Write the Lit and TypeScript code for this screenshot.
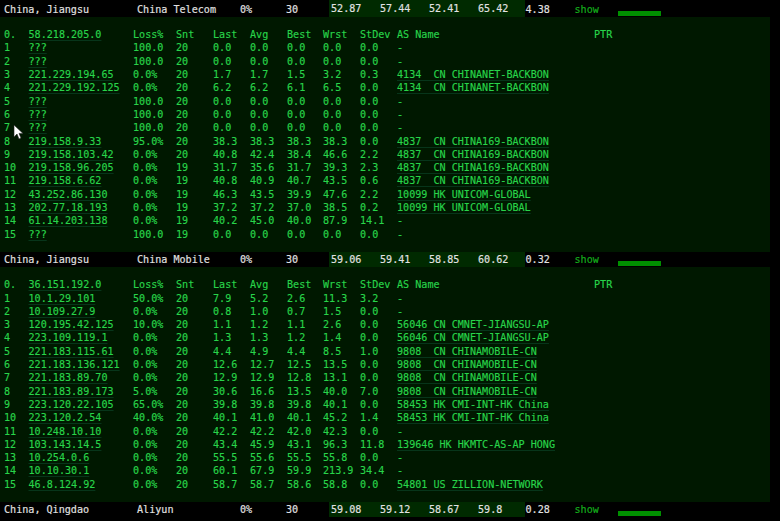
import { LitElement, html, css } from "lit";
import { customElement } from "lit/decorators.js";

type Hop = string[];
const p1: Hop[] = [
  ["1","???","100.0","20","0.0","0.0","0.0","0.0","0.0","-"],
  ["2","???","100.0","20","0.0","0.0","0.0","0.0","0.0","-"],
  ["3","221.229.194.65","0.0%","20","1.7","1.7","1.5","3.2","0.3","4134  CN CHINANET-BACKBON"],
  ["4","221.229.192.125","0.0%","20","6.2","6.2","6.1","6.5","0.0","4134  CN CHINANET-BACKBON"],
  ["5","???","100.0","20","0.0","0.0","0.0","0.0","0.0","-"],
  ["6","???","100.0","20","0.0","0.0","0.0","0.0","0.0","-"],
  ["7","???","100.0","20","0.0","0.0","0.0","0.0","0.0","-"],
  ["8","219.158.9.33","95.0%","20","38.3","38.3","38.3","38.3","0.0","4837  CN CHINA169-BACKBON"],
  ["9","219.158.103.42","0.0%","20","40.8","42.4","38.4","46.6","2.2","4837  CN CHINA169-BACKBON"],
  ["10","219.158.96.205","0.0%","19","31.7","35.6","31.7","39.3","2.3","4837  CN CHINA169-BACKBON"],
  ["11","219.158.6.62","0.0%","19","40.8","40.9","40.7","43.5","0.6","4837  CN CHINA169-BACKBON"],
  ["12","43.252.86.130","0.0%","19","46.3","43.5","39.9","47.6","2.2","10099 HK UNICOM-GLOBAL"],
  ["13","202.77.18.193","0.0%","19","37.2","37.2","37.0","38.5","0.2","10099 HK UNICOM-GLOBAL"],
  ["14","61.14.203.138","0.0%","19","40.2","45.0","40.0","87.9","14.1","-"],
  ["15","???","100.0","19","0.0","0.0","0.0","0.0","0.0","-"],
];
const p2: Hop[] = [
  ["1","10.1.29.101","50.0%","20","7.9","5.2","2.6","11.3","3.2","-"],
  ["2","10.109.27.9","0.0%","20","0.8","1.0","0.7","1.5","0.0","-"],
  ["3","120.195.42.125","10.0%","20","1.1","1.2","1.1","2.6","0.0","56046 CN CMNET-JIANGSU-AP"],
  ["4","223.109.119.1","0.0%","20","1.3","1.3","1.2","1.4","0.0","56046 CN CMNET-JIANGSU-AP"],
  ["5","221.183.115.61","0.0%","20","4.4","4.9","4.4","8.5","1.0","9808  CN CHINAMOBILE-CN"],
  ["6","221.183.136.121","0.0%","20","12.6","12.7","12.5","13.5","0.0","9808  CN CHINAMOBILE-CN"],
  ["7","221.183.89.70","0.0%","20","12.9","12.9","12.8","13.1","0.0","9808  CN CHINAMOBILE-CN"],
  ["8","221.183.89.173","5.0%","20","30.6","16.6","13.5","40.0","7.0","9808  CN CHINAMOBILE-CN"],
  ["9","223.120.22.105","65.0%","20","39.8","39.8","39.8","40.1","0.0","58453 HK CMI-INT-HK China"],
  ["10","223.120.2.54","40.0%","20","40.1","41.0","40.1","45.2","1.4","58453 HK CMI-INT-HK China"],
  ["11","10.248.10.10","0.0%","20","42.2","42.2","42.0","42.3","0.0","-"],
  ["12","103.143.14.5","0.0%","20","43.4","45.9","43.1","96.3","11.8","139646 HK HKMTC-AS-AP HONG"],
  ["13","10.254.0.6","0.0%","20","55.5","55.6","55.5","55.8","0.0","-"],
  ["14","10.10.30.1","0.0%","20","60.1","67.9","59.9","213.9","34.4","-"],
  ["15","46.8.124.92","0.0%","20","58.7","58.7","58.6","58.8","0.0","54801 US ZILLION-NETWORK"],
];

@customElement("app-root")
export class AppRoot extends LitElement {
  static styles = css`
    :host { display: block; width: 780px; height: 521px; overflow: hidden; background: #000; position: relative;
      font-family: "DejaVu Sans Mono", "Liberation Mono", monospace; font-size: 10.1px; }
    .summary { display: grid; grid-template-columns: 137px 103px 46px 42.5px 49px 49px 49px 49px 50px 43px 43px 118px;
      height: 14.7px; align-items: center; color: #e2e2e2; white-space: pre; -webkit-text-stroke: 0.15px currentColor; }
    .summary.first { height: 16.5px; padding-top: 1.8px; box-sizing: border-box; }
    .summary > span:first-child { padding-left: 4px; }
    .summary.first .mid, .summary.first .bar { margin-top: -1.8px; }
    .mid { background: #002a00; align-self: stretch; display: flex; align-items: center; padding-left: 2.5px; }
    .dev { padding-left: 1px; }
    .show { color: #14b01c; }
    .bar { height: 5px; background: #009000; align-self: end; margin-bottom: 0.7px; }
    .panel { width: 770px; height: 235.4px; background: #001800; color: #28d44a; padding-top: 11.7px; box-sizing: border-box;
      -webkit-text-stroke: 0.15px currentColor; }
    .row { display: grid; grid-template-columns: 28.5px 104.5px 43px 37px 37px 37px 36px 37px 37px 197px auto;
      height: 13.3px; line-height: 13.3px; white-space: pre; }
    .row > span:first-child { padding-left: 4px; }
    .link { text-decoration: underline; text-decoration-color: #07351a; text-underline-offset: 1.5px; }
    .cursor { position: absolute; left: 13px; top: 124px; }
  `;
  private panel(head: string, hops: Hop[]) {
    return html`<div class="panel">
      <div class="row"><span>0.</span><span><span class="link">${head}</span></span><span>Loss%</span><span>Snt</span><span>Last</span><span>Avg</span><span>Best</span><span>Wrst</span><span>StDev</span><span>AS Name</span><span>PTR</span></div>
      ${hops.map((h) => html`<div class="row">${h.slice(0, 1).map((c) => html`<span>${c}</span>`)}<span><span class="link">${h[1]}</span></span>${h.slice(2, 9).map((c) => html`<span>${c}</span>`)}<span><span class=${h[9] === "-" ? "" : "link"}>${h[9]}</span></span><span></span></div>`)}
    </div>`;
  }
  private summary(a: string, b: string, v: string[], dev: string, first = false) {
    return html`<div class="summary ${first ? "first" : ""}">
      <span>${a}</span><span>${b}</span><span>0%</span><span>30</span>
      ${v.map((x) => html`<span class="mid">${x}</span>`)}
      <span class="dev">${dev}</span><span class="show">show</span><span class="bar"></span>
    </div>`;
  }
  render() {
    return html`
      ${this.summary("China, Jiangsu", "China Telecom", ["52.87", "57.44", "52.41", "65.42"], "4.38", true)}
      ${this.panel("58.218.205.0", p1)}
      ${this.summary("China, Jiangsu", "China Mobile", ["59.06", "59.41", "58.85", "60.62"], "0.32")}
      ${this.panel("36.151.192.0", p2)}
      ${this.summary("China, Qingdao", "Aliyun", ["59.08", "59.12", "58.67", "59.8"], "0.28")}
      <svg class="cursor" width="12" height="17" viewBox="0 0 12 17"><path d="M1 1v12l3-3 2 5 2-1-2-4.600h4z" fill="#fff" stroke="#222" stroke-width=".6"/></svg>
    `;
  }
}
